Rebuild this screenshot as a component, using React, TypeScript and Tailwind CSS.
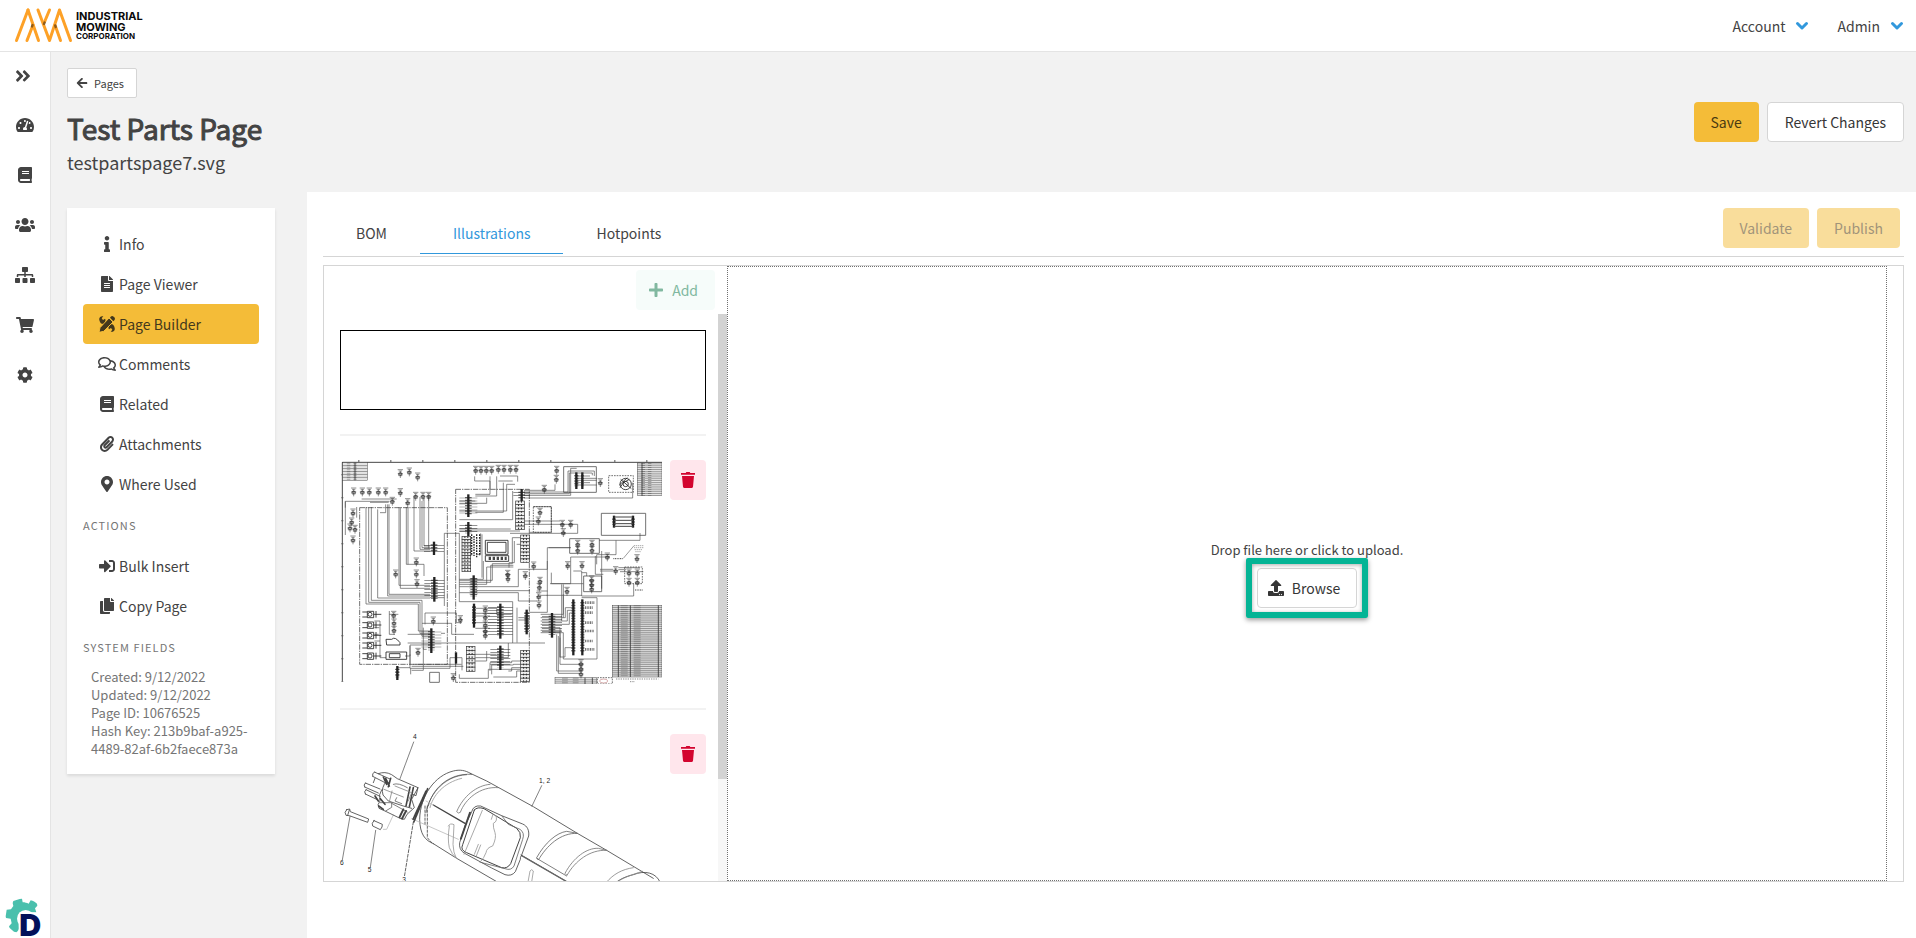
import type { ReactNode } from "react"
import {
  FaAngleDoubleRight,
  FaArrowLeft,
  FaBook,
  FaCog,
  FaCopy,
  FaFileAlt,
  FaInfo,
  FaMapMarkerAlt,
  FaPaperclip,
  FaPlus,
  FaRegComments,
  FaShoppingCart,
  FaSignInAlt,
  FaSitemap,
  FaTachometerAlt,
  FaUpload,
  FaUsers,
} from "react-icons/fa"

const Logo = () => (
  <svg width="140" height="40" viewBox="0 0 140 40" role="img" aria-label="Industrial Mowing Corporation">
    <g stroke="#fda127" strokeWidth="3" strokeLinecap="round" fill="none">
      <path d="M4.5 34.5 16 4M15 34.5 21 19M37.5 4 32.5 16M48.500 34.500 43 19" />
      <path d="M16 4 26.500 34.500M26 4 37.500 34.500M37.500 34.500 47.500 4M47.500 4 58.500 34.500" />
    </g>
    <g stroke="#6b4210" strokeWidth="2.4" strokeLinecap="round" opacity="0.75">
      <path d="M20 20.500 20.600 19M32 18 32.600 16.500M43.200 19.500 43.700 21" />
    </g>
    <g fill="#0a0a0a" fontFamily="Inter, 'Liberation Sans', sans-serif" fontWeight="700">
      <text x="64" y="14" fontSize="11">INDUSTRIAL</text>
      <text x="64" y="25" fontSize="11">MOWING</text>
      <text x="64" y="33" fontSize="8">CORPORATION</text>
    </g>
  </svg>
)

const PencilWrench = () => (
  <svg width="16" height="16" viewBox="0 0 48 48" fill="currentColor">
    <path d="M1 12C-1 4 6-1 13 1L8 7l4 5 6-4c3 4 1 8 0 10l5 5-6 6-6-6C6 25 2 18 1 12Z" />
    <path d="M47 36c2 8-5 13-12 11l5-6-4-5-6 4c-3-4-1-8 0-10l-3-3 6-6 4 4c5-2 9 4 10 11Z" />
    <path d="M30 6 42 18 14 46 0 49 3 35Z" stroke="#f4bc38" strokeWidth="3" />
    <path d="M33 5l2-3c3-3 7-2 9 0l2 2c3 3 2 7 0 9l-3 3Z" />
  </svg>
)

const GearLogo = () => (
  <svg width="40" height="40" viewBox="14 140 120 120" role="img" aria-label="D">
    <path
      d="M58 143 65 142 67 153C74 153 79 155 85 157L91 147C99 148 104 152 110 157L111 163 104 171 108 183 64 183 54 196 55 226C56 233 54 239 48 243L41 241 28 230 26 225 34 216 31 202 17 200 16 195 19 175 32 174 39 164 37 155 39 149Z"
      fill="#4ac0ad"
    />
    <circle cx="76" cy="202" r="26" fill="#fff" />
    <path d="M58 184H110V260H58Z" fill="#fff" />
    <text x="57" y="254" fill="#02115a" fontSize="91" fontWeight="900" fontFamily="Inter, 'Liberation Sans', sans-serif">D</text>
  </svg>
)

const Chevron = () => (
  <svg width="14" height="10" viewBox="0 0 14 10" fill="none" stroke="#3298dc" strokeWidth="3" strokeLinecap="round" strokeLinejoin="round">
    <path d="M2.500 2.500 7 7 11.500 2.500" />
  </svg>
)

const Trash = () => (
  <svg width="14" height="16" viewBox="0 0 42 48" fill="currentColor">
    <path d="M14 3 16 0H26L28 3H42V8H0V3ZM3 12H39L36 44Q35 48 32 48H10Q7 48 6 44Z" />
  </svg>
)

type GridProps = { x: number; y: number; w: number; h: number; rows: number; cols: number[]; fill?: string }

const Grid = ({ x, y, w, h, rows, cols, fill = "#e5e5e5" }: GridProps) => (
  <g stroke="#333" strokeWidth="1.3">
    <rect x={x} y={y} width={w} height={h} fill={fill} />
    {Array.from({ length: rows - 1 }, (_, i) => (
      <path key={i} d={`M${x} ${y + ((i + 1) * h) / rows}h${w}`} />
    ))}
    {cols.map((c) => (
      <path key={c} d={`M${x + c} ${y}v${h}`} strokeWidth="2.500" />
    ))}
    <path d={`M${x + w * 0.24} ${y}v${h}M${x + w * 0.5} ${y}v${h}`} strokeWidth={w * 0.14} strokeDasharray="3 3" opacity="0.35" />
  </g>
)

// connector block: a dark spine with short pins on either side
const Connector = ({ x, y, h, w = 44 }: { x: number; y: number; h: number; w?: number }) => (
  <g stroke="#222">
    <path d={`M${x} ${y}v${h}`} strokeWidth="7" />
    <path d={`M${x} ${y + 8}v${h - 16}`} strokeWidth={Math.min(w, 20)} strokeDasharray="4 4" opacity="0.65" />
    <path d={`M${x} ${y + 10}v${h - 20}`} strokeWidth={w} strokeDasharray="2 7" opacity="0.65" />
  </g>
)

const Terminal = ({ x, y, h, n, w = 26 }: { x: number; y: number; h: number; n: number; w?: number }) => (
  <g stroke="#333" strokeWidth="2" fill="#eee">
    {Array.from({ length: n }, (_, i) => (
      <rect key={i} x={x} y={y + (i * h) / n} width={w} height={h / n} />
    ))}
    <path d={`M${x + w / 3} ${y}v${h}M${x + (w * 2) / 3} ${y}v${h}`} strokeDasharray="5 5" strokeWidth="3" />
  </g>
)

// small component symbol: a ring, a body and its label ticks
const Part = ({ x, y }: { x: number; y: number }) => (
  <g transform={`translate(${x} ${y})`} stroke="#222" fill="none" strokeWidth="1.500">
    <path d="M-8-9H8M-5-5H5M-5 1H5V9H-5ZM0-5V16" />
    <circle r="4" cy="4" />
    <path d="M-8 3H8" opacity="0.7" />
  </g>
)

const parts = [
  [71, 150], [97, 150], [118, 150], [145, 150], [167, 150], [187, 178], [211, 152], [233, 182], [257, 163], [279, 163],
  [296, 163], [211, 95], [238, 90], [263, 105], [69, 213], [65, 240], [60, 258], [75, 262], [69, 294], [437, 85],
  [453, 85], [469, 85], [485, 85], [505, 82], [522, 82], [541, 82], [558, 82], [680, 85], [679, 112], [643, 142],
  [811, 122], [197, 396], [259, 360], [259, 396], [261, 425], [191, 520], [192, 543], [192, 565], [310, 537], [391, 533],
  [466, 504], [466, 526], [466, 549], [466, 567], [466, 580], [533, 397], [534, 410], [586, 401], [611, 372], [630, 211],
  [625, 237], [697, 247], [722, 247], [700, 272], [743, 307], [786, 307], [743, 325], [786, 325], [713, 371], [756, 371],
  [785, 414], [785, 428], [785, 441], [897, 393], [922, 393], [897, 421], [922, 421], [921, 350], [832, 345], [857, 386],
  [630, 418], [628, 436], [626, 464], [627, 489], [711, 448], [753, 665], [753, 680], [753, 696], [264, 631], [370, 707],
]

const wires = [
  "M108 198V489H265V570H300", "M116 198V484H270V578H300", "M124 198V478H276V586H300", "M143 205V471H300", "M150 215H167V190",
  "M173 190V465H300", "M177 190V460H300", "M207 198V433H300", "M211 198V442H300", "M229 198V370H282V405",
  "M234 198V370", "M252 168V330H300", "M270 168V325H300", "M276 180V320H300", "M282 172V315H300", "M296 166V322",
  "M343 495V277H388M343 470H300", "M46 282V181H178M46 181V200M80 198V230", "M95 174H200M120 184H176",
  "M388 180H436M388 187H470V170M388 210H530V130H555M388 236H548V150", "M436 160H480V106M436 165H500V106M436 214H520V125",
  "M388 264H542M388 270H570M540 277H743V250H582M582 240H690", "M388 277V482H548V606", "M460 360V415H388M456 280V410M452 277V340H440",
  "M388 418H487V368H547V290H570M388 424H482V373H550M388 430H470V378H550M388 437H565V385H652V320H722",
  "M436 449H600M388 455H565V480H620", "M553 300V365H537V380M560 310H572", "M434 106V120H480V145M505 120H548M510 105H563V122",
  "M582 148H675V130M582 153H714V90H793V105M582 158H718V96H787V103M582 163H722V82H740",
  "M582 171H908V125", "M610 197H664V274H600", "M740 105H780M740 112H800M740 118H800M740 125H780M740 132H800",
  "M656 320H722M652 514V360M598 514H652M660 428H722V348M664 395V428H760", "M808 298H930V276M858 298V341H800V370M815 330V443",
  "M722 348H840M730 390H755V465H911V428M755 395H770V405M796 345V400H820", "M865 380H930M865 386H888M870 392H940",
  "M810 385H850M810 390H850", "M653 450H620M695 430V540M700 430V530M650 463H755M630 463H653",
  "M632 520H700V460M632 530H706V500H725M632 540H712V508H725M632 550H718V516H725", "M632 560H690V648H705V620H725M632 568H695M632 575H700V640",
  "M675 575H690V670H750M680 580V690H750M685 585V697H750M690 590V650", "M755 470H801V654H700V640",
  "M285 550V516H379V545H396M276 547H365V580H432M233 606H645", "M240 670V612H300M240 640V682H360V650H396V688M245 676H400M250 670H395",
  "M280 620V688H245M178 510V580H195M178 520H205M233 580H300M333 577H345", "M436 502H500V520H545M436 517H500M436 525H480M436 545H500M436 562H480",
  "M561 500V605M565 530H590M565 537H590M535 606V650H500M436 640H500M436 650H500M436 660H470V630",
  "M388 700V712H475V685H570M480 690V665H545V660H572M485 700V672H550V670H572M490 708H560V690H572M535 690H545V680H572",
  "M133 540H150V650H168M133 560H148M133 580H146M133 600H150M240 615V645H225", "M280 560V625H290M202 680H240M242 700V682",
]

const Schematic = () => (
  <svg className="w-full" viewBox="30 57 966 672" role="img" aria-label="Wiring schematic">
    <path d="M37 64H996M37 64V722" stroke="#222" strokeWidth="2.500" />
    <path d="M85 60H996" stroke="#555" strokeWidth="6" strokeDasharray="3 93" />
    <path d="M37 100V722" stroke="#555" strokeWidth="6" strokeDasharray="3 66" />
    <g fill="none" stroke="#555" strokeWidth="2.500">
      <path d="M89 200H352V670H89Z" strokeDasharray="16 3 4 3" />
      <path d="M377 145H598V724H377Z" strokeDasharray="16 3 4 3" />
      <path d="M701 77H799V154H701ZM814 217H947V283H814ZM719 293H808V337H719ZM761 405H815V452H761ZM299 694H328V724H299Z" />
      <path d="M836 104H910V154H836ZM610 197H664V274H610ZM802 710H847V729H802ZM884 378H937V428H884Z" strokeDasharray="5 3" />
      <path d="M466 298H534V340H466ZM466 344H536V361H466ZM472 304H528V334H472Z" stroke="#222" />
    </g>
    <g fill="none" stroke="#333" strokeWidth="2" opacity="0.85">
      {wires.map((d) => (
        <path key={d} d={d} />
      ))}
    </g>
    <path d="M476 352H530" stroke="#444" strokeWidth="10" strokeDasharray="7 5" />
    <Grid x={38} y={65} w={74} h={53} rows={6} cols={[37]} />
    <Grid x={922} y={66} w={74} h={98} rows={15} cols={[14]} />
    <Grid x={847} y={493} w={149} h={215} rows={34} cols={[18, 54, 138]} fill="#dcdcdc" />
    <Grid x={675} y={710} w={124} h={19} rows={3} cols={[90, 112]} />
    <Connector x={415} y={160} h={68} w={54} />
    <Connector x={415} y={243} h={42} w={54} />
    <Connector x={312} y={302} h={40} w={60} />
    <Connector x={313} y={408} h={74} w={60} />
    <Connector x={304} y={562} h={74} w={60} />
    <Connector x={431} y={403} h={73} w={26} />
    <Connector x={432} y={488} h={72} w={12} />
    <Connector x={511} y={488} h={105} w={74} />
    <Connector x={511} y={614} h={73} w={60} />
    <Connector x={575} y={144} h={36} w={50} />
    <Connector x={590} y={506} h={74} w={14} />
    <Connector x={666} y={516} h={74} w={60} />
    <Connector x={730} y={475} h={168} w={12} />
    <Connector x={757} y={475} h={168} w={12} />
    <Connector x={852} y={224} h={36} w={10} />
    <Connector x={909} y={224} h={36} w={10} />
    <Connector x={739} y={94} h={50} w={12} />
    <Connector x={757} y={94} h={50} w={8} />
    <Connector x={378} y={634} h={34} w={6} />
    <Connector x={202} y={675} h={42} w={12} />
    <path d="M765 485H795M765 500H788M765 515H790M765 545H788M765 570H792M765 600H788M765 625H795" stroke="#777" strokeWidth="8" strokeDasharray="3 2" />
    <path d="M852 228H909M852 238H909M852 248H909M852 256H909" stroke="#444" strokeWidth="3" />
    <path d="M425 280V345M432 285V345M440 280V350M449 280V345" stroke="#222" strokeWidth="4" strokeDasharray="5 3" />
    <Terminal x={396} y={286} h={106} n={11} />
    <Terminal x={557} y={180} h={86} n={8} />
    <Terminal x={572} y={282} h={82} n={8} />
    <Terminal x={409} y={616} h={75} n={6} />
    <Terminal x={572} y={628} h={94} n={9} />
    {[520, 552, 583, 613, 645].map((y) => (
      <g key={y} stroke="#222" fill="none" strokeWidth="2.500">
        <path d={`M97 ${y - 7}H112M97 ${y + 8}H112M112 ${y - 9}H131V${y + 10}H112ZM131 ${y}H154M138 ${y - 10}V${y + 10}`} />
        <circle cx="120" cy={y} r="6" />
      </g>
    ))}
    {parts.map(([x, y]) => (
      <Part key={`${x}-${y}`} x={x} y={y} />
    ))}
    <g fill="none" stroke="#222" strokeWidth="2.500">
      <path d="M168 633H230V655H168ZM178 638H210V650H178ZM168 595H185Q195 585 210 605V612H170Z" />
      <circle cx="887" cy="129" r="17" />
      <circle cx="887" cy="129" r="8" />
      <path d="M872 115 904 143M868 132 892 110M870 140 880 125 898 115" />
      <path d="M880 352 912 314" stroke="#888" />
      <path d="M912 314H942M912 320H942M914 326H938M916 332H932" stroke="#999" strokeDasharray="4 2" />
      <path d="M850 353H880M915 447H940" strokeDasharray="3 2" />
      <ellipse cx="821" cy="720" rx="12" ry="6" stroke="#c99" />
      <path d="M858 714H985M900 722H915" stroke="#777" strokeDasharray="4 3" />
    </g>
  </svg>
)

const PartsDrawing = () => (
  <svg className="w-full" viewBox="60 129 966 672" role="img" aria-label="Exploded parts drawing">
    <g fill="none" stroke="#444" strokeWidth="2.500" strokeLinecap="round" strokeLinejoin="round">
      <path d="M451 247C436 238 420 235 400 240 345 253 300 315 299 385 300 430 315 448 340 458" />
      <path d="M451 247 500 270 640 347 772 427 860 478 1000 562" />
      <path d="M340 458 410 502 532 573M603 492 742 573" />
      <path d="M1020 573C1008 545 975 537 940 551 915 557 900 565 890 573" />
      <path d="M968 541C930 553 905 562 892 573M940 530C905 535 880 550 860 573" stroke="#888" />
      <path d="M455 250C380 245 335 300 325 345M440 251C365 255 325 320 318 365" strokeWidth="2" />
      <path d="M425 262C370 275 338 315 330 350" stroke="#999" />
      <path d="M322 345 322 440 335 455M315 345V405" strokeDasharray="7 5" />
      <path d="M340 342 435 397" strokeWidth="4" />
      <path d="M605 494 742 573" strokeWidth="4" stroke="#666" />
      <path d="M275 383 415 445M318 330 340 342" stroke="#bbb" />
      <path d="M535 290C480 285 435 325 421 364Q415 369 410 362C430 315 470 283 510 280" stroke="#777" />
      <path d="M772 427C720 425 680 465 655 507L650 500C675 455 710 425 740 421L772 427M650 502 740 555" stroke="#666" />
      <path d="M860 478C810 475 765 510 741 553L735 547C760 500 800 470 835 472L860 478" stroke="#777" />
      <path d="M385 405Q390 395 402 401L399 460Q400 485 408 500M388 405Q382 445 388 470 395 490 410 502" stroke="#999" />
      <path d="M624 573 630 540Q635 532 640 540L635 573" stroke="#999" />
      <path d="M455 362Q460 342 482 345L545 374 608 399C622 405 628 418 626 435L605 492Q600 499 601 505L586 542Q575 557 555 551L515 531 432 486Q416 475 419 455L437 400Z" />
      <path d="M463 357 428 461Q420 477 440 485L545 530Q562 534 572 518L601 440Q604 424 590 412L492 353Q472 346 463 357Z" strokeWidth="3" />
      <path d="M545 374 565 400 600 415Q615 425 608 445L582 525Q573 540 555 533L482 514" stroke="#666" />
      <path d="M450 365 422 445" strokeWidth="6" strokeDasharray="3 2" />
      <path d="M487 358 432 490M527 373Q535 390 520 397 519 410 525 425 530 440 518 465 500 470 498 485 493 500 480 514M475 460 463 490M482 462 469 495M519 370 514 385" stroke="#999" />
      <path d="M665 284 635 347M281 153 240 263" strokeWidth="2" strokeDasharray="12 2" />
      <path d="M280 393 253 558" strokeWidth="2.500" strokeDasharray="9 5" />
      <path d="M90 376 67 507M167 418 151 529" strokeWidth="2" />
      <path d="M190 415H200L220 372" stroke="#bbb" />
      <path d="M80 356 89 354 91 362 146 384 143 394 88 374 78 373Q71 364 80 356ZM88 357 83 373" />
      <path d="M162 389 187 400Q188 408 181 416L158 405Q153 397 162 389Z" />
      <path d="M323 293 281 394M318 300 279 385" strokeWidth="5" strokeDasharray="3 2" />
      <path d="M175 248Q195 240 215 251L232 263 294 290 288 314 278 310" />
      <path d="M163 243 210 264M158 256 205 280M163 243Q155 248 158 256M136 276 180 294M134 288 175 306M136 276Q129 282 134 288M138 296 180 316M136 309 170 325M138 296Q130 302 136 309" />
      <path d="M165 262 160 275M185 296Q175 310 180 330 170 340 177 352L195 360 240 382 253 385 261 370 283 350 275 325 294 290M200 270Q182 290 189 312L205 330 250 345 275 352" />
      <path d="M197 262 208 285M190 258 200 280M212 262 205 287M270 288 258 345M280 290 268 348" strokeWidth="5" strokeDasharray="4 2" />
      <path d="M180 335 215 335 215 349 197 360M220 280Q235 274 262 290M230 320 225 330 245 338M215 337 262 363" stroke="#666" />
      <path d="M225 285 275 305 265 330M192 295 250 318M216 300 208 332" stroke="#888" />
      <path d="M250 355 238 380M258 360 246 383" strokeWidth="6" strokeDasharray="5 2" />
      <path d="M181 323 195 340M165 315 175 330M176 345 190 355" strokeWidth="5" />
    </g>
    <g fill="#222" fontSize="20" fontFamily="'Liberation Sans', Arial, sans-serif">
      <text x="279" y="143">4</text>
      <text x="657" y="275">1, 2</text>
      <text x="60" y="522">6</text>
      <text x="143" y="544">5</text>
      <text x="247" y="574">3</text>
    </g>
  </svg>
)

const railLinks = [
  { label: "Dashboard", icon: <FaTachometerAlt size={18} /> },
  { label: "Library", icon: <FaBook size={16} /> },
  { label: "Users", icon: <FaUsers size={20} /> },
  { label: "Organization", icon: <FaSitemap size={20} /> },
  { label: "Orders", icon: <FaShoppingCart size={18} /> },
  { label: "Settings", icon: <FaCog size={16} /> },
]

const menu = [
  { label: "Info", icon: <FaInfo size={16} /> },
  { label: "Page Viewer", icon: <FaFileAlt size={16} /> },
  { label: "Page Builder", icon: <PencilWrench />, active: true },
  { label: "Comments", icon: <FaRegComments size={18} /> },
  { label: "Related", icon: <FaBook size={16} /> },
  { label: "Attachments", icon: <FaPaperclip size={16} /> },
  { label: "Where Used", icon: <FaMapMarkerAlt size={16} /> },
]

const actions = [
  { label: "Bulk Insert", icon: <FaSignInAlt size={16} /> },
  { label: "Copy Page", icon: <FaCopy size={16} /> },
]

const MenuItem = ({ label, icon, active }: { label: string; icon: ReactNode; active?: boolean }) => (
  <li>
    <a
      href="#"
      className={`flex h-10 items-center rounded px-3.5 ${active ? "bg-[#f4bc38] text-[#43381c]" : "text-[#434343]"}`}
    >
      <span className="flex w-5 justify-center">{icon}</span>
      <span className="pl-0.5">{label}</span>
    </a>
  </li>
)

const Thumb = ({ children, name }: { children: ReactNode; name: string }) => (
  <li className="flex items-start justify-between border-t-2 border-[#f2f2f2] py-6">
    <div className="w-[322px]">{children}</div>
    <button aria-label={`Delete ${name}`} className="flex h-10 w-9 items-center justify-center rounded bg-[#ffe6ec] text-[#d3052f]">
      <Trash />
    </button>
  </li>
)

const App = () => {
  return (
    <div className="flex h-screen flex-col overflow-hidden bg-[#f2f2f2] font-['Noto_Sans_CJK_SC','Open_Sans',sans-serif] text-[14px] leading-6 text-[#434343]">
      <header className="flex h-[52px] shrink-0 items-center justify-between border-b border-[#e4e4e4] bg-white pl-3">
        <a href="#">
          <Logo />
        </a>
        <nav className="flex gap-7 pr-3">
          <button className="flex items-center gap-2.5">
            Account <Chevron />
          </button>
          <button className="flex items-center gap-2.5">
            Admin <Chevron />
          </button>
        </nav>
      </header>

      <div className="flex min-h-0 flex-1">
        <aside className="flex w-[51px] shrink-0 flex-col items-center justify-between border-r border-[#e4e4e4] bg-white">
          <nav className="flex flex-col items-center">
            <button aria-label="Expand menu" className="flex h-12 items-center pr-1">
              <FaAngleDoubleRight size={18} />
            </button>
            {railLinks.map((link) => (
              <a key={link.label} href="#" aria-label={link.label} className="flex h-[50px] items-center">
                {link.icon}
              </a>
            ))}
          </nav>
          <a href="#">
            <GearLogo />
          </a>
        </aside>

        <div className="flex min-w-0 flex-1 flex-col">
          <div className="flex items-center justify-between px-4 pt-4 pr-3">
            <div>
              <a href="#" className="inline-flex h-[30px] items-center gap-1.5 rounded-xs border border-[#d5d5d5] bg-white px-2 pr-3 text-[11px]">
                <FaArrowLeft size={12} />
                Pages
              </a>
              <h1 className="mt-2.5 text-[28px] leading-10 [-webkit-text-stroke:1px_#434343]">Test Parts Page</h1>
              <p className="text-[18px] leading-7">testpartspage7.svg</p>
            </div>
            <div className="flex gap-2">
              <button className="h-10 rounded bg-[#f4bc38] px-[17px] text-[#4a3a11]">Save</button>
              <button className="h-10 rounded border border-[#d5d5d5] bg-white px-[17px] text-[#363636]">Revert Changes</button>
            </div>
          </div>

          <div className="mt-4 flex min-h-0 flex-1">
            <aside className="mt-4 mr-8 ml-4 w-[208px] shrink-0 self-start bg-white p-4 shadow-[0_2px_3px_#0000001a]">
              <ul>
                {menu.map((item) => (
                  <MenuItem key={item.label} {...item} />
                ))}
              </ul>
              <h2 className="flex h-[42px] items-center text-[11px] tracking-widest text-[#757575]">ACTIONS</h2>
              <ul>
                {actions.map((item) => (
                  <MenuItem key={item.label} {...item} />
                ))}
              </ul>
              <h2 className="flex h-[42px] items-center text-[11px] tracking-widest text-[#757575]">SYSTEM FIELDS</h2>
              <div className="px-2 text-[13px] leading-[18px] text-[#757575]">
                <p>Created: 9/12/2022</p>
                <p>Updated: 9/12/2022</p>
                <p>Page ID: 10676525</p>
                <p>Hash Key: 213b9baf-a925-4489-82af-6b2faece873a</p>
              </div>
            </aside>

            <main className="flex min-w-0 flex-1 flex-col bg-white pt-4 pr-3 pb-14 pl-4">
              <div className="flex justify-between border-b border-[#d5d5d5] pb-0.5">
                <nav className="flex">
                  <a href="#" className="flex h-[46px] items-center px-[33px] pt-1">BOM</a>
                  <a href="#" className="flex h-[46px] items-center border-b border-[#3298dc] px-[33px] pt-1 text-[#3298dc]">Illustrations</a>
                  <a href="#" className="flex h-[46px] items-center px-[33px] pt-1">Hotpoints</a>
                </nav>
                <div className="flex gap-2 pr-1">
                  <button disabled className="h-10 rounded bg-[#f9dd9b] px-[17px] text-[#a1947a]">Validate</button>
                  <button disabled className="h-10 rounded bg-[#f9dd9b] px-[17px] text-[#a1947a]">Publish</button>
                </div>
              </div>

              <div className="mt-2 flex min-h-0 flex-1 border border-[#d5d5d5] pr-4">
                <section className="flex w-[403px] shrink-0 flex-col">
                  <div className="flex justify-end px-3 py-1">
                    <button className="flex h-10 items-center gap-2 rounded bg-[#f6fcfa] px-3 pr-[17px] text-[#81b8a0]">
                      <FaPlus size={16} />
                      Add
                    </button>
                  </div>
                  <div className="flex min-h-0 flex-1 justify-between overflow-hidden pl-4">
                    <ul className="w-[366px] pt-4">
                      <li className="mb-6 h-20 border border-black" />
                      <Thumb name="schematic">
                        <Schematic />
                      </Thumb>
                      <Thumb name="parts drawing">
                        <PartsDrawing />
                      </Thumb>
                    </ul>
                    <div className="w-[9px] bg-[#f7f7f7]">
                      <div className="h-[82%] bg-[#d3d3d3]" />
                    </div>
                  </div>
                </section>

                <section className="flex flex-1 flex-col items-center justify-center border border-dotted border-[#707070]">
                  <p className="pb-2 text-[13px] leading-5">Drop file here or click to upload.</p>
                  <div className="relative">
                    <button className="flex h-10 items-center gap-2 rounded border border-[#d5d5d5] bg-white pr-4 pl-2.5 text-[#363636]">
                      <FaUpload size={16} />
                      Browse
                    </button>
                    <div className="pointer-events-none absolute -inset-x-[11px] -inset-y-[10px] rounded-xs border-6 border-[#04b495] shadow-[0_2px_5px_#00000066,inset_0_1px_4px_#00000055]" />
                  </div>
                </section>
              </div>
            </main>
          </div>
        </div>
      </div>
    </div>
  )
}

export default App
